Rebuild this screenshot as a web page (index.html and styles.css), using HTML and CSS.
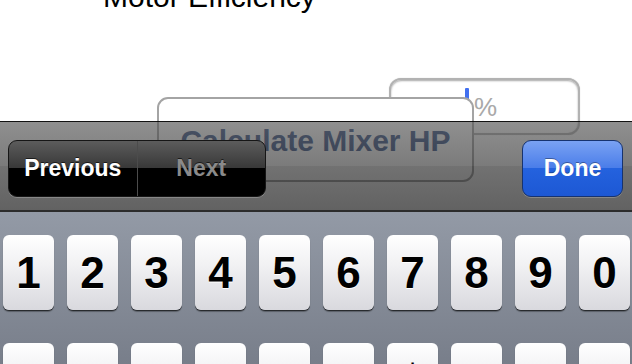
FILE: index.html
```html
<!DOCTYPE html>
<html>
<head>
<meta charset="utf-8">
<link rel="stylesheet" href="styles.css">
</head>
<body>
<main class="page">
  <h1 class="title">Motor Efficiency</h1>
  <div class="pct-field"><span class="caret"></span><span class="unit">%</span></div>
  <div class="calc-btn">Calculate Mixer HP</div>
</main>
<div class="accessory">
  <div class="toolbar">
    <div class="segmented">
      <div class="seg seg-active">Previous</div>
      <div class="seg seg-disabled">Next</div>
    </div>
    <div class="done">Done</div>
  </div>
  <div class="keyboard">
    <div class="key-row">
      <div class="key">1</div><div class="key">2</div><div class="key">3</div><div class="key">4</div><div class="key">5</div><div class="key">6</div><div class="key">7</div><div class="key">8</div><div class="key">9</div><div class="key">0</div>
    </div>
    <div class="key-row">
      <div class="key">-</div><div class="key">/</div><div class="key">:</div><div class="key">;</div><div class="key">(</div><div class="key">)</div><div class="key">$</div><div class="key">&amp;</div><div class="key">@</div><div class="key">"</div>
    </div>
  </div>
</div>
</body>
</html>
```
FILE: styles.css
```css
html, body {
  margin: 0;
  padding: 0;
}
body {
  width: 632px;
  height: 364px;
  overflow: hidden;
  position: relative;
  background: #ffffff;
  font-family: "Liberation Sans", Arial, sans-serif;
}
.page {
  display: flex;
  flex-direction: column;
  align-items: flex-start;
}
.title {
  margin: -21px 0 0 103px;
  font-size: 30px;
  line-height: 36px;
  font-weight: 400;
  color: #000;
}
.pct-field {
  box-sizing: border-box;
  margin: 63px 0 0 389px;
  width: 191px;
  height: 57px;
  border: 2px solid #b2b2b2;
  border-radius: 12px;
  box-shadow: inset 0 1px 2px rgba(0,0,0,0.35), 0 0 1px rgba(0,0,0,0.25);
  background: #fff;
  display: flex;
  align-items: flex-start;
  padding-left: 74px;
}
.caret {
  display: block;
  width: 4px;
  height: 15px;
  margin-top: 8px;
  background: #4270f0;
  border-radius: 1px;
}
.unit {
  display: block;
  margin: 14px 0 0 5px;
  font-size: 26px;
  line-height: 26px;
  color: #a9a9a9;
}
.calc-btn {
  position: relative;
  box-sizing: border-box;
  margin: -38px 0 0 157px;
  width: 317px;
  height: 85px;
  border: 2px solid #a4a4a4;
  border-radius: 11px;
  background: #fff;
  display: flex;
  align-items: center;
  justify-content: center;
  padding-top: 2px;
  font-size: 30px;
  font-weight: 700;
  color: #385487;
}
.accessory {
  position: absolute;
  top: 121px;
  left: 0;
  width: 632px;
}
.toolbar {
  border-top: 1px solid rgba(0,0,0,0.8);
  border-bottom: 2px solid #2c2c2c;
  background: linear-gradient(to bottom,
    rgba(84,84,84,0.65) 0%,
    rgba(52,52,52,0.65) 50%,
    rgba(38,38,38,0.65) 50%,
    rgba(14,14,14,0.65) 100%);
  display: flex;
  justify-content: space-between;
  align-items: flex-start;
  padding: 18px 9px 0 8px;
  box-sizing: border-box;
  height: 91px;
}
.segmented {
  box-sizing: border-box;
  width: 258px;
  height: 57px;
  border: 1px solid #161616;
  border-radius: 9px;
  overflow: hidden;
  display: flex;
  background: linear-gradient(to bottom, #5c5c5c 0%, #383838 49%, #000 50%, #000 100%);
  box-shadow: 0 1px 0 rgba(255,255,255,0.22);
}
.seg {
  flex: 1;
  display: flex;
  align-items: center;
  justify-content: center;
  font-size: 23px;
  font-weight: 700;
  text-shadow: 0 -1px 0 rgba(0,0,0,0.6);
}
.seg-active {
  color: #fff;
}
.seg-disabled {
  color: #8a8a8a;
  border-left: 1px solid #4c4c4c;
}
.done {
  box-sizing: border-box;
  width: 101px;
  height: 57px;
  border: 1px solid #17336f;
  border-radius: 9px;
  background: linear-gradient(to bottom, #7aa2f3 0%, #4a7de9 49%, #2462de 50%, #1d58d4 100%);
  box-shadow: 0 1px 0 rgba(255,255,255,0.22);
  display: flex;
  align-items: center;
  justify-content: center;
  font-size: 23px;
  font-weight: 700;
  color: #fff;
  text-shadow: 0 -1px 0 rgba(0,0,0,0.35);
}
.keyboard {
  height: 152px;
  background: linear-gradient(to bottom, #939aa6 0%, #787e8a 100%);
  padding: 23px 0 0 3px;
  box-sizing: border-box;
  display: flex;
  flex-direction: column;
  gap: 33px;
}
.key-row {
  display: flex;
  gap: 13px;
}
.key {
  flex: none;
  width: 51px;
  height: 75px;
  border-radius: 6px;
  background: linear-gradient(to bottom, #ffffff 0%, #f1f1f3 40%, #d9d9de 100%);
  box-shadow: 0 1px 0 rgba(0,0,0,0.55), 0 2px 1px rgba(0,0,0,0.3);
  display: flex;
  align-items: center;
  justify-content: center;
  font-size: 44px;
  font-weight: 700;
  color: #000;
  text-shadow: 0 1px 0 #fff;
}
```
